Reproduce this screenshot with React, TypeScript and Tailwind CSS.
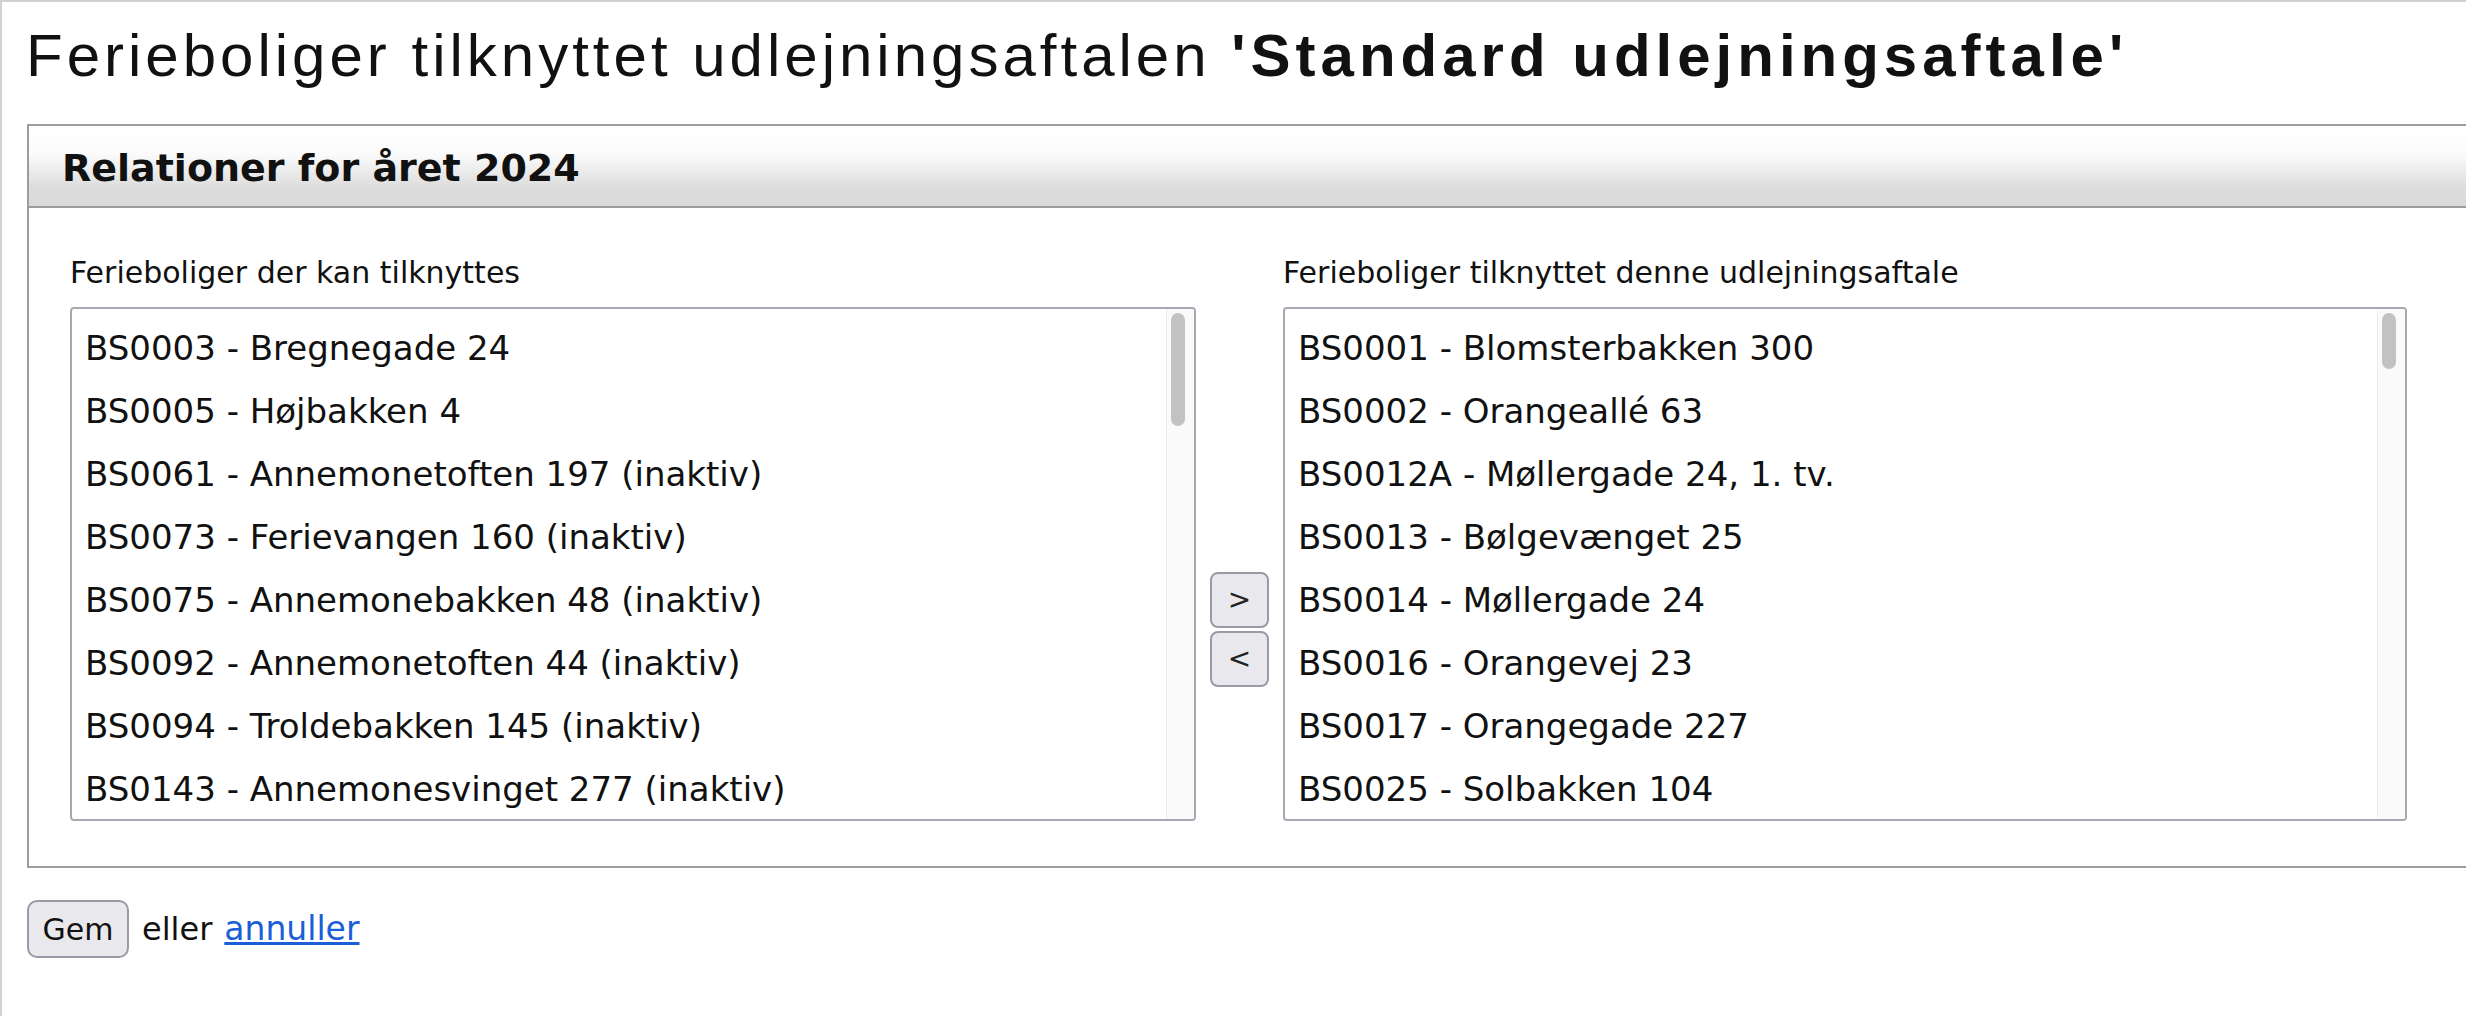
const kanTilknyttes = [
  "BS0003 - Bregnegade 24",
  "BS0005 - Højbakken 4",
  "BS0061 - Annemonetoften 197 (inaktiv)",
  "BS0073 - Ferievangen 160 (inaktiv)",
  "BS0075 - Annemonebakken 48 (inaktiv)",
  "BS0092 - Annemonetoften 44 (inaktiv)",
  "BS0094 - Troldebakken 145 (inaktiv)",
  "BS0143 - Annemonesvinget 277 (inaktiv)",
];

const tilknyttet = [
  "BS0001 - Blomsterbakken 300",
  "BS0002 - Orangeallé 63",
  "BS0012A - Møllergade 24, 1. tv.",
  "BS0013 - Bølgevænget 25",
  "BS0014 - Møllergade 24",
  "BS0016 - Orangevej 23",
  "BS0017 - Orangegade 227",
  "BS0025 - Solbakken 104",
];

function ListeBoks({
  titel,
  items,
  width,
  thumb,
}: {
  titel: string;
  items: string[];
  width: string;
  thumb: string;
}) {
  return (
    <div className="flex flex-col">
      <p className="text-[30px] leading-[30px] whitespace-nowrap">{titel}</p>
      <div
        className={`mt-[19px] h-[514px] ${width} flex rounded-[4px] border-2 border-[#a8a8b0] bg-white overflow-hidden`}
      >
        <ul className="flex-1 pt-[8px] pl-[13px]">
          {items.map((item) => (
            <li key={item} className="h-[63px] text-[34px] leading-[63px] whitespace-nowrap">
              {item}
            </li>
          ))}
        </ul>
        <div className="w-[28px] bg-[#fafafa] border-l border-[#ececec]">
          <div className={`ml-[4px] mt-[4px] w-[14px] ${thumb} rounded-full bg-[#c2c2c2]`} />
        </div>
      </div>
    </div>
  );
}

export default function App() {
  return (
    <div className="w-[2466px] h-[1016px] overflow-hidden bg-white border-t-2 border-l-2 border-[#d2d2d2] text-[#111] font-['DejaVu_Sans',sans-serif]">
      <h1 className="pl-[24px] pt-[24px] h-[82px] text-[60px] leading-[60px] tracking-[4px] whitespace-nowrap font-['Liberation_Sans',Arial,sans-serif]">
        Ferieboliger tilknyttet udlejningsaftalen{" "}
        <span className="font-bold tracking-[5px]">'Standard udlejningsaftale'</span>
      </h1>

      <div className="ml-[25px] mt-[40px] w-[2480px] border-2 border-[#9d9d9d]">
        <div className="h-[82px] border-b-2 border-[#9d9d9d] bg-[linear-gradient(to_bottom,#ffffff_0%,#fbfbfb_35%,#dcdcdc_78%,#d9d9d9_100%)] pl-[33px] pt-[23px]">
          <h2 className="text-[38px] leading-[38px] font-bold">Relationer for året 2024</h2>
        </div>

        <div className="flex pl-[41px] pt-[50px] pb-[45px]">
          <ListeBoks
            titel="Ferieboliger der kan tilknyttes"
            items={kanTilknyttes}
            width="w-[1126px]"
            thumb="h-[113px]"
          />

          <div className="w-[87px] flex flex-col items-center gap-[3px] pt-[314px]">
            <button className="w-[59px] h-[56px] rounded-[8px] border-2 border-[#9a9aa6] bg-[#e9e9ed] text-[28px] leading-none text-[#222]">
              &gt;
            </button>
            <button className="w-[59px] h-[56px] rounded-[8px] border-2 border-[#9a9aa6] bg-[#e9e9ed] text-[28px] leading-none text-[#222]">
              &lt;
            </button>
          </div>

          <ListeBoks
            titel="Ferieboliger tilknyttet denne udlejningsaftale"
            items={tilknyttet}
            width="w-[1124px]"
            thumb="h-[56px]"
          />
        </div>
      </div>

      <div className="ml-[25px] mt-[32px] flex items-center">
        <button className="w-[102px] h-[58px] rounded-[10px] border-2 border-[#9a9aa6] bg-[#e9e9ed] text-[30px] text-[#111]">
          Gem
        </button>
        <span className="ml-[13px] text-[32px]">eller</span>
        <a href="#" className="ml-[12px] text-[33px] text-[#1a5fd8] underline">
          annuller
        </a>
      </div>
    </div>
  );
}
